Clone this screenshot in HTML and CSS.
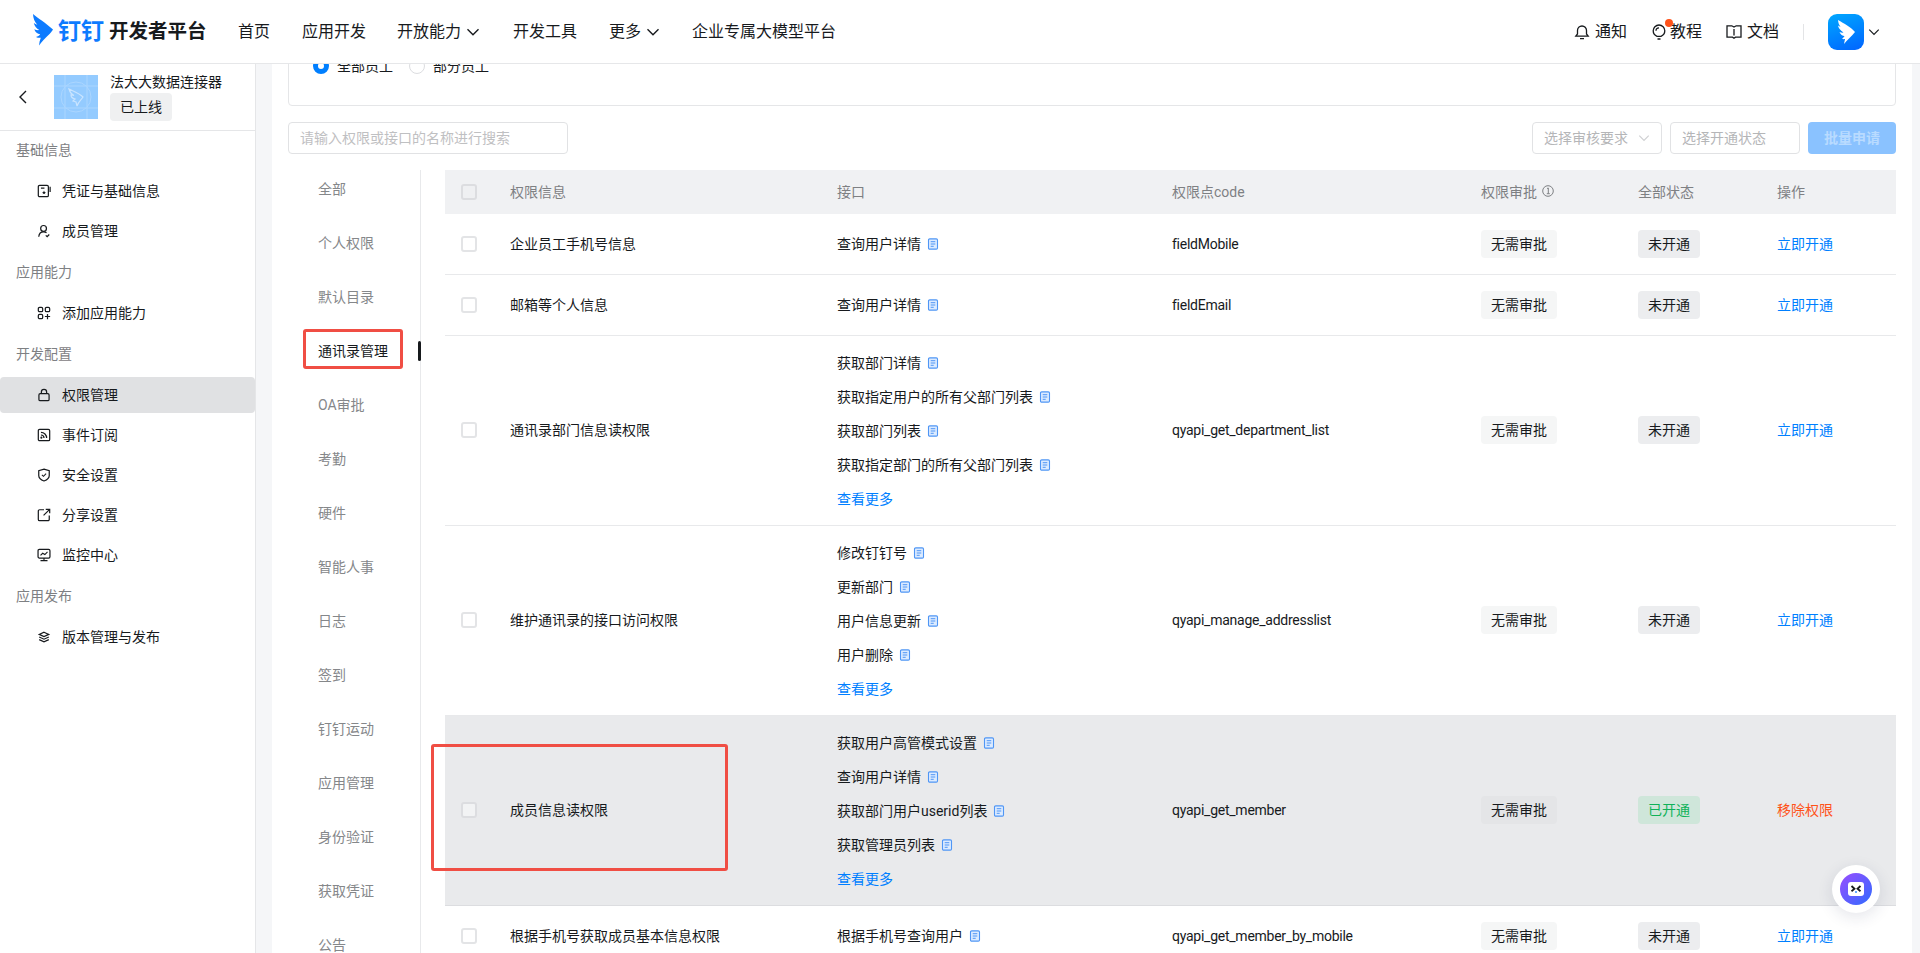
FILE: index.html
```html
<!DOCTYPE html>
<html lang="zh-CN">
<head>
<meta charset="utf-8">
<title>钉钉开发者平台</title>
<link rel="stylesheet" href="styles.css">
</head>
<body>
<svg class="sprite" width="0" height="0" aria-hidden="true">
  <symbol id="doc" viewBox="0 0 12 12">
    <rect x="1.5" y="0.9" width="9" height="10.2" rx="1.2" fill="#dcebff" stroke="#4f96f5" stroke-width="1.1"/>
    <path d="M3.7 3.7h4.600M3.700 6h4.600M3.700 8.300h3" stroke="#4f96f5" stroke-width="1"/>
  </symbol>
  <symbol id="chev" viewBox="0 0 14 14">
    <path d="M1.500 4.200 7 9.700l5.500-5.500" fill="none" stroke="currentColor" stroke-width="1.400"/>
  </symbol>
</svg>

<header class="topbar">
  <a class="logo">
    <svg class="logo-mark" viewBox="0 0 21 32"><path d="M1 0c4.500 4 13 9 20 15.500-.8 1.600-2.800 4-4.500 5.600C13.500 24 10 27.500 7 31.500c.2-2.500.8-5.200 1.800-7.700-1.900.2-3.500-.1-4.800-.8 1.700-.3 3.300-1.300 4.200-2.700C5.600 19.900 3.100 18 2.300 15.200c1.700.9 3.500 1.200 5 .9C4.500 14.500 2.300 11.700 1.800 9c1.100.9 2.300 1.500 3.500 1.800C2.700 8 1.100 4.200 1 0Z" fill="#0d7bff"/></svg>
    <span class="logo-ding">钉钉</span>
    <span class="logo-name">开发者平台</span>
  </a>
  <nav class="nav">
    <a class="nav-item nav-w1">首页</a>
    <a class="nav-item nav-w2">应用开发</a>
    <a class="nav-item nav-w3">开放能力<svg class="chev"><use href="#chev"/></svg></a>
    <a class="nav-item nav-w4">开发工具</a>
    <a class="nav-item nav-w5">更多<svg class="chev"><use href="#chev"/></svg></a>
    <a class="nav-item">企业专属大模型平台</a>
  </nav>
  <div class="tools">
    <a class="tool tool-first">
      <svg class="tool-ic" viewBox="0 0 16 16"><path d="M1.800 12.200h12.400l-1.700-2.200V6.500a4.500 4.500 0 0 0-9 0V10L1.800 12.200ZM6 14.700h4" fill="none" stroke="#171a1d" stroke-width="1.300"/></svg>
      通知
    </a>
    <a class="tool tool-tight">
      <span class="bulb">
        <svg class="tool-ic" viewBox="0 0 16 16"><path d="M6 12.300C3.800 11.400 2.200 9.300 2.200 6.800a5.800 5.800 0 0 1 11.600 0c0 2.500-1.600 4.600-3.800 5.500H6ZM6.500 15h3M5 6.800c0-1.700 1.300-3 3-3" fill="none" stroke="#171a1d" stroke-width="1.300"/></svg>
        <i class="dot"></i>
      </span>
      教程
    </a>
    <a class="tool">
      <svg class="tool-ic" viewBox="0 0 16 16"><path d="M1 1.800h4.800L8 3l2.200-1.200H15v11.400H9.500L8 14.300l-1.500-1.100H1V1.800ZM8 5v6.500" fill="none" stroke="#171a1d" stroke-width="1.300"/></svg>
      文档
    </a>
    <span class="divider"></span>
    <span class="avatar">
      <svg viewBox="0 0 36 36"><path d="M10 6c6 3.500 13 7 17 12-3 4-8 8-11 12l1-5c-1 .2-2 .2-3 0 1-.8 2-2 2.500-3-2 0-4-1.500-5-4 1.400.6 2.800.8 4 .5C12 16 10.400 14 10 11.500c.8.600 1.600 1 2.500 1.200C11 11 10.200 8.500 10 6Z" fill="#fff"/></svg>
    </span>
    <svg class="chev chev-user"><use href="#chev"/></svg>
  </div>
</header>

<div class="layout">
  <aside class="sidebar">
    <div class="app-head">
      <svg class="back" viewBox="0 0 8 14"><path d="M7 1 1 7l6 6" fill="none" stroke="#171a1d" stroke-width="1.400"/></svg>
      <div class="app-thumb">
        <svg viewBox="0 0 44 44"><path d="M0 11h44M0 33h44M11 0v44M33 0v44" stroke="#abd6ff" stroke-width="1"/><circle cx="22" cy="22" r="15" fill="none" stroke="#abd6ff" stroke-width="1"/><path d="M15 14c4 2 10 4 14 8-2 3-5 5-6 9l-1-4-3-1 2-2c-2-.5-4-2-4-4l3 .5c-2-1-4-3-5-6.500Z" fill="none" stroke="#c9e4ff" stroke-width="1.200"/></svg>
      </div>
      <div class="app-info">
        <div class="app-name">法大大数据连接器</div>
        <span class="app-state">已上线</span>
      </div>
    </div>
    <div class="menu">
      <div class="menu-title">基础信息</div>
      <a class="menu-item"><svg class="menu-ic" viewBox="0 0 16 16"><path d="M11.500 14.500H3A1.500 1.500 0 0 1 1.500 13V3A1.500 1.500 0 0 1 3 1.500h8.500A1.500 1.500 0 0 1 13 3v10a1.500 1.500 0 0 1-1.500 1.500ZM15 3v6M4.500 4.800h4" fill="none" stroke="#171a1d" stroke-width="1.400"/><path d="m8 7.500.7 1.500 1.500.2-1.100 1 .3 1.500-1.400-.8-1.400.8.3-1.500-1.100-1 1.500-.2Z" fill="#171a1d"/></svg>凭证与基础信息</a>
      <a class="menu-item"><svg class="menu-ic" viewBox="0 0 16 16"><circle cx="7.500" cy="5" r="3.300" fill="none" stroke="#171a1d" stroke-width="1.400"/><path d="M2 14.500c.3-3 2-5.500 5.500-5.500 1.500 0 2.500.4 3.400 1M10 13l1.600 1.500L14 12" fill="none" stroke="#171a1d" stroke-width="1.400"/></svg>成员管理</a>
      <div class="menu-title">应用能力</div>
      <a class="menu-item"><svg class="menu-ic" viewBox="0 0 16 16"><rect x="1.500" y="1.500" width="5" height="5" rx="1.500" fill="none" stroke="#171a1d" stroke-width="1.400"/><rect x="9.500" y="1.500" width="5" height="5" rx="1.500" fill="none" stroke="#171a1d" stroke-width="1.400"/><rect x="1.500" y="9.500" width="5" height="5" rx="1.500" fill="none" stroke="#171a1d" stroke-width="1.400"/><path d="M9 12h6M12 9v6" stroke="#171a1d" stroke-width="1.400"/></svg>添加应用能力</a>
      <div class="menu-title">开发配置</div>
      <a class="menu-item is-active"><svg class="menu-ic" viewBox="0 0 16 16"><rect x="2.200" y="6.500" width="11.600" height="8" rx="1.500" fill="none" stroke="#171a1d" stroke-width="1.400"/><path d="M5 6.500V4.500a3 3 0 0 1 6 0v2" fill="none" stroke="#171a1d" stroke-width="1.400"/></svg>权限管理</a>
      <a class="menu-item"><svg class="menu-ic" viewBox="0 0 16 16"><rect x="1.500" y="1.500" width="13" height="13" rx="1.500" fill="none" stroke="#171a1d" stroke-width="1.400"/><path d="M4.500 5c3.700 0 6.500 2.800 6.500 6.500M4.500 8c1.900 0 3.500 1.600 3.500 3.500" fill="none" stroke="#171a1d" stroke-width="1.400"/><circle cx="5" cy="11" r="1.200" fill="#171a1d"/></svg>事件订阅</a>
      <a class="menu-item"><svg class="menu-ic" viewBox="0 0 16 16"><path d="M8 1.200 14 3v5.500c0 3-2.500 5-6 6.300-3.500-1.300-6-3.300-6-6.300V3Z" fill="none" stroke="#171a1d" stroke-width="1.400"/><path d="m5.600 7.800 1.800 1.700 3-3" fill="none" stroke="#171a1d" stroke-width="1.200"/></svg>安全设置</a>
      <a class="menu-item"><svg class="menu-ic" viewBox="0 0 16 16"><path d="M8 2H3a1.500 1.500 0 0 0-1.500 1.500v9.500A1.500 1.500 0 0 0 3 14.500h9.500A1.500 1.500 0 0 0 14 13V8.500M7.500 8.500l7-7M10 1.500h4.500V6" fill="none" stroke="#171a1d" stroke-width="1.400"/></svg>分享设置</a>
      <a class="menu-item"><svg class="menu-ic" viewBox="0 0 16 16"><rect x="1.200" y="1.500" width="13.600" height="10" rx="1.500" fill="none" stroke="#171a1d" stroke-width="1.400"/><path d="m4 8.500 2.500-2.500L9 7.500l3-3M8 11.500v2.500M4 14.500h8" fill="none" stroke="#171a1d" stroke-width="1.300"/></svg>监控中心</a>
      <div class="menu-title">应用发布</div>
      <a class="menu-item"><svg class="menu-ic" viewBox="0 0 16 16"><path d="M8 2.500 13.500 5 8 7.500 2.500 5ZM2.500 8 8 10.500 13.500 8M2.500 11 8 13.500 13.500 11" fill="none" stroke="#171a1d" stroke-width="1.300"/></svg>版本管理与发布</a>
    </div>
  </aside>

  <main class="workspace">
    <div class="content">
      <section class="card">
        <label class="radio"><i class="radio-dot is-on"></i>全部员工</label>
        <label class="radio"><i class="radio-dot"></i>部分员工</label>
      </section>

      <div class="toolbar">
        <input class="search" placeholder="请输入权限或接口的名称进行搜索">
        <div class="filters">
          <div class="select select-arrow">选择审核要求<svg class="chev"><use href="#chev"/></svg></div>
          <div class="select">选择开通状态</div>
          <button class="apply" disabled>批量申请</button>
        </div>
      </div>

      <div class="panel">
        <div class="tabs">
          <a class="tab">全部</a>
          <a class="tab">个人权限</a>
          <a class="tab">默认目录</a>
          <a class="tab is-current">通讯录管理<i class="mark-tab"></i></a>
          <a class="tab">OA审批</a>
          <a class="tab">考勤</a>
          <a class="tab">硬件</a>
          <a class="tab">智能人事</a>
          <a class="tab">日志</a>
          <a class="tab">签到</a>
          <a class="tab">钉钉运动</a>
          <a class="tab">应用管理</a>
          <a class="tab">身份验证</a>
          <a class="tab">获取凭证</a>
          <a class="tab">公告</a>
        </div>

        <div class="grid">
          <div class="row row-head">
            <div class="cell cell-check"><i class="check"></i></div>
            <div class="cell">权限信息</div>
            <div class="cell">接口</div>
            <div class="cell">权限点code</div>
            <div class="cell">权限审批<svg class="info" viewBox="0 0 12 12"><circle cx="6" cy="6" r="5.300" fill="none" stroke="#7e8083"/><path d="M5 3.500 6.300 3v5.500M4.800 8.700h3" fill="none" stroke="#7e8083"/></svg></div>
            <div class="cell">全部状态</div>
            <div class="cell">操作</div>
          </div>

          <div class="row">
            <div class="cell cell-check"><i class="check"></i></div>
            <div class="cell">企业员工手机号信息</div>
            <div class="cell cell-api"><div class="api">查询用户详情<svg class="doc"><use href="#doc"/></svg></div></div>
            <div class="cell cell-code">fieldMobile</div>
            <div class="cell"><span class="tag">无需审批</span></div>
            <div class="cell"><span class="tag tag-off">未开通</span></div>
            <div class="cell"><a class="link">立即开通</a></div>
          </div>

          <div class="row">
            <div class="cell cell-check"><i class="check"></i></div>
            <div class="cell">邮箱等个人信息</div>
            <div class="cell cell-api"><div class="api">查询用户详情<svg class="doc"><use href="#doc"/></svg></div></div>
            <div class="cell cell-code">fieldEmail</div>
            <div class="cell"><span class="tag">无需审批</span></div>
            <div class="cell"><span class="tag tag-off">未开通</span></div>
            <div class="cell"><a class="link">立即开通</a></div>
          </div>

          <div class="row is-tall">
            <div class="cell cell-check"><i class="check"></i></div>
            <div class="cell">通讯录部门信息读权限</div>
            <div class="cell cell-api">
              <div class="api">获取部门详情<svg class="doc"><use href="#doc"/></svg></div>
              <div class="api">获取指定用户的所有父部门列表<svg class="doc"><use href="#doc"/></svg></div>
              <div class="api">获取部门列表<svg class="doc"><use href="#doc"/></svg></div>
              <div class="api">获取指定部门的所有父部门列表<svg class="doc"><use href="#doc"/></svg></div>
              <div class="api"><a class="link">查看更多</a></div>
            </div>
            <div class="cell cell-code">qyapi_get_department_list</div>
            <div class="cell"><span class="tag">无需审批</span></div>
            <div class="cell"><span class="tag tag-off">未开通</span></div>
            <div class="cell"><a class="link">立即开通</a></div>
          </div>

          <div class="row is-tall">
            <div class="cell cell-check"><i class="check"></i></div>
            <div class="cell">维护通讯录的接口访问权限</div>
            <div class="cell cell-api">
              <div class="api">修改钉钉号<svg class="doc"><use href="#doc"/></svg></div>
              <div class="api">更新部门<svg class="doc"><use href="#doc"/></svg></div>
              <div class="api">用户信息更新<svg class="doc"><use href="#doc"/></svg></div>
              <div class="api">用户删除<svg class="doc"><use href="#doc"/></svg></div>
              <div class="api"><a class="link">查看更多</a></div>
            </div>
            <div class="cell cell-code">qyapi_manage_addresslist</div>
            <div class="cell"><span class="tag">无需审批</span></div>
            <div class="cell"><span class="tag tag-off">未开通</span></div>
            <div class="cell"><a class="link">立即开通</a></div>
          </div>

          <div class="row is-tall is-hover">
            <i class="mark-row"></i>
            <div class="cell cell-check"><i class="check"></i></div>
            <div class="cell">成员信息读权限</div>
            <div class="cell cell-api">
              <div class="api">获取用户高管模式设置<svg class="doc"><use href="#doc"/></svg></div>
              <div class="api">查询用户详情<svg class="doc"><use href="#doc"/></svg></div>
              <div class="api">获取部门用户userid列表<svg class="doc"><use href="#doc"/></svg></div>
              <div class="api">获取管理员列表<svg class="doc"><use href="#doc"/></svg></div>
              <div class="api"><a class="link">查看更多</a></div>
            </div>
            <div class="cell cell-code">qyapi_get_member</div>
            <div class="cell"><span class="tag">无需审批</span></div>
            <div class="cell"><span class="tag tag-on">已开通</span></div>
            <div class="cell"><a class="link link-danger">移除权限</a></div>
          </div>

          <div class="row">
            <div class="cell cell-check"><i class="check"></i></div>
            <div class="cell">根据手机号获取成员基本信息权限</div>
            <div class="cell cell-api"><div class="api">根据手机号查询用户<svg class="doc"><use href="#doc"/></svg></div></div>
            <div class="cell cell-code">qyapi_get_member_by_mobile</div>
            <div class="cell"><span class="tag">无需审批</span></div>
            <div class="cell"><span class="tag tag-off">未开通</span></div>
            <div class="cell"><a class="link">立即开通</a></div>
          </div>
        </div>
      </div>
    </div>
  </main>
</div>

<div class="bot">
  <span class="bot-inner">
    <span class="bot-face">
      <svg viewBox="0 0 16 14"><path d="m3.500 4 3 2.800-3 2.400M12.500 4l-3 2.800 3 2.400" fill="none" stroke="#171a1d" stroke-width="1.800"/><circle cx="8" cy="10" r="1" fill="#2f8cff"/></svg>
    </span>
  </span>
</div>
</body>
</html>
```

FILE: styles.css
```css
* { box-sizing: border-box; }

html, body {
  margin: 0;
  height: 100%;
  overflow: hidden;
}

body {
  display: flex;
  flex-direction: column;
  background: #f5f6f8;
  color: #171a1d;
  font: 14px/22px Roboto, "Noto Sans CJK SC", sans-serif;
}

a { color: inherit; text-decoration: none; }
i { display: block; }

.sprite { position: absolute; }

/* top bar */
.topbar {
  flex: none;
  height: 64px;
  display: flex;
  align-items: center;
  padding-left: 32px;
  background: #fff;
  border-bottom: 1px solid #e6e7e9;
  position: relative;
  z-index: 2;
}

.logo { display: flex; align-items: center; width: 206px; }
.logo-mark { width: 21px; height: 32px; margin-right: 5px; margin-top: -3px; }
.logo-ding {
  color: #0d7bff;
  font-size: 23px;
  line-height: 28px;
  font-weight: 700;
  margin-right: 5px;
}
.logo-name { font-size: 19.5px; line-height: 28px; font-weight: 700; white-space: nowrap; }

.nav { display: flex; align-items: center; font-size: 16px; }
.nav-item { display: flex; align-items: center; white-space: nowrap; }
.nav-w1 { width: 64px; }
.nav-w2 { width: 95px; }
.nav-w3 { width: 116px; }
.nav-w4 { width: 96px; }
.nav-w5 { width: 83px; }

.chev { width: 14px; height: 14px; color: #171a1d; margin-left: 5px; }

.tools {
  margin-left: auto;
  display: flex;
  align-items: center;
  padding-right: 40px;
  font-size: 16px;
}
.tool { display: flex; align-items: center; margin-right: 25px; white-space: nowrap; }
.tool-first { margin-right: 24px; }
.tool-ic { width: 16px; height: 16px; margin-right: 5px; display: block; }
.tool-tight .tool-ic { margin-right: 3px; }
.tool-tight { margin-right: 24px; }
.bulb { position: relative; }
.dot {
  position: absolute;
  right: -3px;
  top: -5px;
  width: 8px;
  height: 8px;
  border-radius: 50%;
  background: #ff5219;
}
.divider { width: 1px; height: 16px; background: #e3e4e6; margin-right: 24px; margin-left: -1px; }
.avatar {
  width: 36px;
  height: 36px;
  border-radius: 9px;
  background: linear-gradient(160deg, #00a8ff, #0064ff);
}
.avatar svg { display: block; width: 36px; height: 36px; }
.chev-user { width: 12px; height: 12px; margin-left: 4px; }

/* shell */
.layout { flex: 1; min-height: 0; display: flex; }

.sidebar {
  flex: none;
  width: 256px;
  background: #fff;
  border-right: 1px solid #e5e6e8;
}

.app-head {
  height: 67px;
  display: flex;
  align-items: center;
  padding-left: 19px;
  border-bottom: 1px solid #e5e6e8;
}
.back { width: 8px; height: 14px; margin-right: 27px; }
.app-thumb { width: 44px; height: 44px; background: #94cbff; margin-right: 12px; }
.app-thumb svg { display: block; width: 44px; height: 44px; }
.app-name { line-height: 20px; margin-top: -2px; white-space: nowrap; }
.app-state {
  display: block;
  width: 62px;
  height: 28px;
  line-height: 28px;
  margin-top: 1px;
  text-align: center;
  background: #eff0f1;
  border-radius: 4px;
}

.menu-title {
  height: 39px;
  line-height: 39px;
  margin-bottom: 3px;
  padding-left: 16px;
  color: #7e8083;
}
.menu-item {
  height: 36px;
  margin-bottom: 4px;
  display: flex;
  align-items: center;
  padding-left: 37px;
  border-radius: 4px;
}
.menu-item.is-active { background: #e0e1e3; }
.menu-ic { width: 14px; height: 14px; margin-right: 11px; flex: none; }

/* content */
.workspace { flex: 1; min-width: 0; padding: 0 8px 0 16px; }
.content { height: 100%; background: #fff; padding: 0 16px; overflow: hidden; }

.card {
  height: 102px;
  margin-top: -60px;
  padding: 50px 0 0 24px;
  display: flex;
  gap: 16px;
  border: 1px solid #e5e6e8;
  border-radius: 4px;
}
.radio { display: flex; align-items: center; height: 22px; gap: 8px; color: #171a1d; }
.radio-dot { width: 16px; height: 16px; border: 1px solid #dcdde0; border-radius: 50%; }
.radio-dot.is-on { border: 5px solid #007fff; }

.toolbar { display: flex; justify-content: space-between; height: 32px; margin-top: 16px; }
.search {
  width: 280px;
  height: 32px;
  padding: 0 11px;
  border: 1px solid #e1e2e4;
  border-radius: 4px;
  font: inherit;
  outline: none;
}
.search::placeholder { color: #bfc0c2; }
.filters { display: flex; gap: 8px; }
.select {
  width: 130px;
  height: 32px;
  display: flex;
  align-items: center;
  justify-content: space-between;
  padding: 0 11px;
  border: 1px solid #e1e2e4;
  border-radius: 4px;
  color: #b5b6b8;
}
.select .chev { width: 12px; height: 12px; margin: 0; color: #cfd0d2; }
.apply {
  width: 88px;
  height: 32px;
  padding: 0;
  border: 0;
  border-radius: 4px;
  background: #8ac2ff;
  color: #b9dbff;
  font: inherit;
  font-weight: 700;
}

.panel { display: flex; margin-top: 16px; }
.tabs {
  flex: none;
  width: 133px;
  padding: 1px 0 40px 30px;
  border-right: 1px solid #e8e9eb;
}
.tab {
  display: block;
  height: 36px;
  line-height: 36px;
  margin-bottom: 18px;
  color: #85878a;
  position: relative;
}
.tab.is-current { color: #171a1d; }
.tab.is-current::after {
  content: "";
  position: absolute;
  right: -1px;
  top: 8px;
  width: 3px;
  height: 20px;
  border-radius: 2px;
  background: #171a1d;
}
.mark-tab {
  position: absolute;
  left: -15px;
  top: -4px;
  width: 100px;
  height: 40px;
  border: 3px solid #f04e44;
  border-radius: 3px;
}

.grid { flex: none; width: 1451px; margin-left: 24px; }
.row {
  display: grid;
  grid-template-columns: 65px 327px 335px 309px 157px 139px 119px;
  min-height: 61px;
  align-items: center;
  border-bottom: 1px solid #e8e9eb;
  position: relative;
}
.row-head {
  min-height: 44px;
  background: #f0f1f3;
  border-bottom: 0;
  color: #7e8083;
}
.row.is-hover { background: #e9eaec; border-bottom-color: #dcdde0; }

.cell { display: flex; align-items: center; white-space: nowrap; }
.cell-check { justify-content: flex-start; padding-left: 16px; }
.cell-code { letter-spacing: -.25px; }
.cell-api { display: block; padding: 13px 0; }
.is-tall .cell-api { padding: 10px 0 9px; }
.is-tall .cell:not(.cell-api) { margin-bottom: 2px; }
.api { height: 34px; display: flex; align-items: center; }

.check {
  width: 16px;
  height: 16px;
  border: 2px solid #e3e4e6;
  border-radius: 3px;
  background: #fff;
}
.row-head .check { background: #eff0f2; border-color: #dcdde0; }
.is-hover .check { background: #f2f3f4; border-color: #dcdde0; }

.doc { width: 12px; height: 12px; margin-left: 6px; flex: none; }
.info { width: 12px; height: 12px; margin-left: 5px; margin-top: -2px; }

.tag {
  display: block;
  height: 28px;
  line-height: 28px;
  padding: 0 10px;
  border-radius: 4px;
  background: #f5f6f6;
}
.is-hover .tag { background: #e4e5e7; }
.tag-off { background: #ecedef; }
.is-hover .tag-on { background: #cfe6da; color: #0fb259; }

.link { color: #007fff; }
.link-danger { color: #ff5219; }

.mark-row {
  position: absolute;
  left: -14px;
  top: 28px;
  width: 297px;
  height: 127px;
  border: 3px solid #f04e44;
  border-radius: 3px;
  z-index: 1;
}

/* floating helper */
.bot {
  position: fixed;
  left: 1832px;
  top: 865px;
  width: 48px;
  height: 48px;
  padding: 8px;
  border-radius: 50%;
  background: #fff;
  box-shadow: 0 4px 16px rgba(30, 40, 80, .12);
  z-index: 3;
}
.bot-inner {
  display: flex;
  align-items: center;
  justify-content: center;
  width: 32px;
  height: 32px;
  border-radius: 50%;
  background: linear-gradient(135deg, #9a4dff, #2f6bff);
}
.bot-face {
  display: block;
  width: 16px;
  height: 14px;
  background: #fff;
  border-radius: 3px;
}
.bot-face svg { display: block; width: 16px; height: 14px; }
```
